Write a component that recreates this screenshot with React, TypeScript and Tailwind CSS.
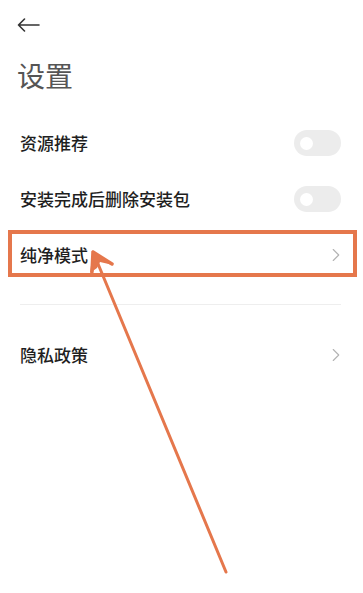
import { ChevronRight } from "lucide-react";

function Toggle() {
  return (
    <div className="w-[47px] h-[26px] rounded-full bg-[#ececec] flex items-center pl-[6px]">
      <div className="w-[13px] h-[13px] rounded-full bg-white" />
    </div>
  );
}

function Row({ label, right }: { label: string; right: React.ReactNode }) {
  return (
    <div className="h-[56px] flex items-center justify-between pl-[20px] pr-[22px]">
      <span className="text-[17px] font-medium text-[#1f1f1f]">{label}</span>
      {right}
    </div>
  );
}

const chevron = <ChevronRight className="w-[22px] h-[22px] text-[#b3b3b3] -mr-[6px]" strokeWidth={1.2} />;

export default function App() {
  return (
    <div
      className="relative w-[363px] h-[593px] bg-white overflow-hidden"
      style={{ fontFamily: '"Noto Sans CJK SC", "Noto Sans", sans-serif' }}
    >
      {/* back */}
      <div className="h-[50px] flex items-center pl-[17px]">
        <svg width="23" height="14" viewBox="0 0 23 14" fill="none" stroke="#333" strokeWidth="1.6" strokeLinecap="round" strokeLinejoin="round">
          <path d="M22 7H1.5M7.5 1L1.5 7l6 6" />
        </svg>
      </div>

      <h1 className="mt-[11px] pl-[17px] text-[28px] leading-[28px] font-normal text-[#555]">设置</h1>

      <div className="mt-[26px]">
        <Row label="资源推荐" right={<Toggle />} />
        <Row label="安装完成后删除安装包" right={<Toggle />} />
        <div className="relative">
          <Row label="纯净模式" right={chevron} />
          <div className="absolute left-[8px] right-[6px] top-[3px] bottom-[6px] border-[4.5px] border-[#e5774c]" />
        </div>
        <div className="mt-[21px] ml-[20px] mr-[22px] h-px bg-[#eeeeee]" />
        <div className="mt-[22px]">
          <Row label="隐私政策" right={chevron} />
        </div>
      </div>

      {/* annotation arrow */}
      <svg className="absolute inset-0 pointer-events-none" width="363" height="593" viewBox="0 0 363 593" fill="none">
        <g stroke="#e5774c" strokeLinecap="round" strokeLinejoin="round">
          <path d="M96 259L226 572" strokeWidth="3" />
          <path d="M93 252L92 272M93 252L112 264" strokeWidth="3.5" />
        </g>
        <path d="M93 251L90 273L97 268L100 262L113 265Z" fill="#e5774c" />
      </svg>
    </div>
  );
}
